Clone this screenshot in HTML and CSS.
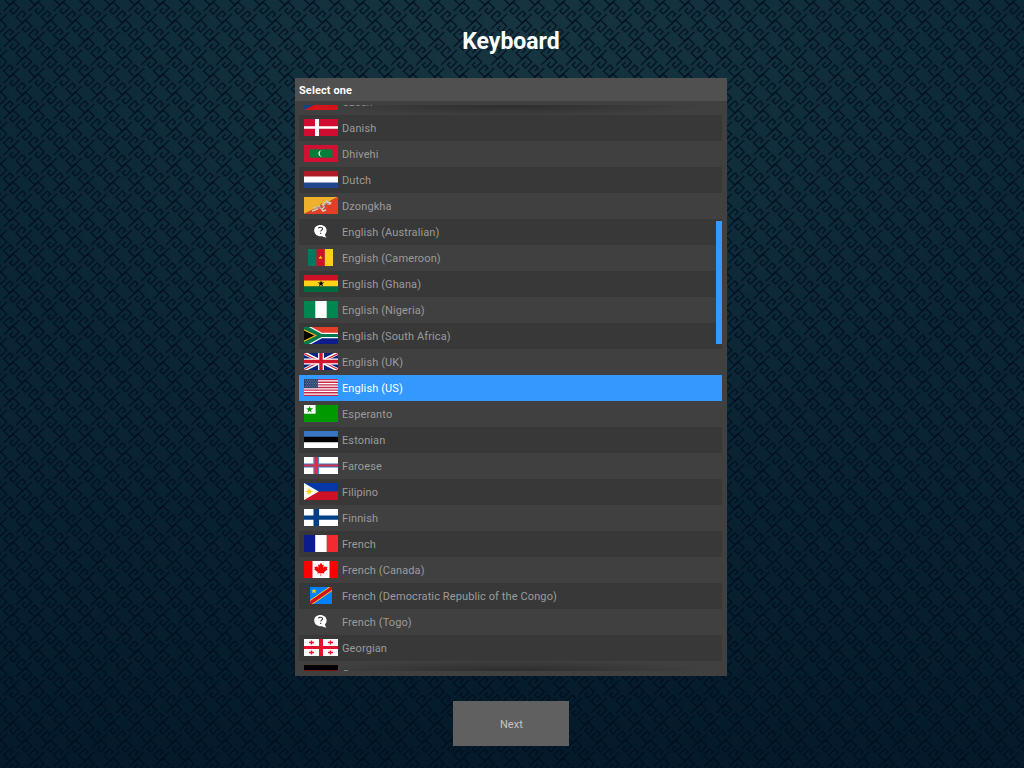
FILE: index.html
```
<!DOCTYPE html>
<html lang="en">
<head>
<meta charset="utf-8">
<title>Keyboard</title>
<link rel="stylesheet" href="styles.css">
</head>
<body>
<svg class="backdrop" width="1024" height="768" aria-hidden="true">
  <defs>
    <g id="key">
      <path d="M-9.4 3L0-6L6.2 0L0 6L-3.1 3L0 0"/>
      <path d="M18.8 6L9.4 15L3.1 9L9.4 3L12.5 6L9.4 9"/>
    </g>
    <pattern id="weave" width="25" height="36" patternUnits="userSpaceOnUse" patternTransform="translate(13 8)">
      <g fill="none" stroke="#000c1c" stroke-opacity=".75" stroke-width="1.5">
        <use href="#key"/><use href="#key" x="25"/>
        <use href="#key" x="-12.5" y="18"/><use href="#key" x="12.5" y="18"/>
        <use href="#key" x="-12.5" y="-18"/><use href="#key" x="12.5" y="-18"/>
        <use href="#key" y="36"/><use href="#key" x="25" y="36"/>
      </g>
    </pattern>
  </defs>
  <rect width="1024" height="768" fill="url(#weave)"/>
</svg>
<main class="screen">
  <h1 class="title">Keyboard</h1>
  <section class="panel">
    <h2 class="panel-head">Select one</h2>
    <div class="viewport">
      <ul class="list">
        <li class="row"><svg class="flag" viewBox="0 0 34 17"><path fill="#fff" d="M0 0h34v9H0z"/><path fill="#d7141a" d="M0 8.5h34V17H0z"/><path fill="#11457e" d="M0 0l17 8.5L0 17z"/></svg>Czech</li>
        <li class="row"><svg class="flag" viewBox="0 0 34 17"><path fill="#d00c33" d="M0 0h34v17H0z"/><path fill="#fff" d="M11 0h4v17h-4zM0 7.3h34v2.4H0z"/></svg>Danish</li>
        <li class="row"><svg class="flag" viewBox="0 0 34 17"><path fill="#d21034" d="M0 0h34v17H0z"/><path fill="#007e3a" d="M5.5 4.3h23v8.4h-23z"/><path fill="#fff" d="M18.6 5.6a3.1 3.1 0 1 0 0 5.8a2.9 2.9 0 0 1 0-5.8z"/></svg>Dhivehi</li>
        <li class="row"><svg class="flag" viewBox="0 0 34 17"><path fill="#fff" d="M0 0h34v17H0z"/><path fill="#ae1c28" d="M0 0h34v5.6H0z"/><path fill="#21468b" d="M0 11.4h34V17H0z"/></svg>Dutch</li>
        <li class="row"><svg class="flag" viewBox="0 0 34 17"><path fill="#efb12c" d="M0 0h34L0 17z"/><path fill="#e33f28" d="M34 0v17H0z"/><path fill="none" stroke="#d3cbbd" stroke-width="1.7" d="M8 14l3-1 2-1-2-1 4-1 3 2 2-2-1-2 3-2 3 1 2-2M15 9l1 1M17 11l2 3 3-1M20 6l4-1 2 2M22 4l2 1M25 5l2 2"/><path fill="none" stroke="#8d7360" stroke-width=".8" d="M11 12l3-2 4 1 3-3 1-2 3 1M18 6l-2 2M22 10l2 1"/></svg>Dzongkha</li>
        <li class="row"><svg class="flag" viewBox="0 0 34 17"><path fill="#fff" d="M16.3 2.1c3.7 0 6.3 2.3 6.3 5.5 0 1.8-.8 3-1.7 4 .1 1.2.7 2 1.8 2.7-2 .3-3.4-.2-4.5-1.1-4.4.8-8-1.7-8-5.6 0-3.2 2.5-5.5 6.1-5.5z"/><path fill="none" stroke="#303030" stroke-width="1.1" d="M14.4 5.4c.4-1.4 4.2-1.6 4.1.3 0 1.4-1.8 1.4-1.8 2.8M16.7 9.7v1.3"/></svg>English (Australian)</li>
        <li class="row"><svg class="flag" viewBox="0 0 34 17"><path fill="#007a5e" d="M4 0h9v17H4z"/><path fill="#ce1126" d="M12.4 0h8.4v17h-8.4z"/><path fill="#fcd116" d="M20.8 0H29v17h-8.2zM16.5 6.5l.6 1.5h1.6l-1.3 1 .5 1.6-1.4-1-1.4 1 .5-1.6-1.3-1h1.6z"/></svg>English (Cameroon)</li>
        <li class="row"><svg class="flag" viewBox="0 0 34 17"><path fill="#ce1126" d="M0 0h34v6H0z"/><path fill="#fcd116" d="M0 5.6h34v6H0z"/><path fill="#006b3f" d="M0 11.4h34V17H0z"/><path d="M17 5.6l.8 2h2.5l-2 1.4.8 2.4-2.1-1.5-2.1 1.5.8-2.4-2-1.4h2.5z"/></svg>English (Ghana)</li>
        <li class="row"><svg class="flag" viewBox="0 0 34 17"><path fill="#008751" d="M0 0h34v17H0z"/><path fill="#fff" d="M11.3 0h11.4v17H11.3z"/></svg>English (Nigeria)</li>
        <li class="row"><svg class="flag" viewBox="0 0 34 17"><path fill="#e23d28" d="M0 0h34v8.5H0z"/><path fill="#0c1c8c" d="M0 8.5h34V17H0z"/><path fill="none" stroke="#fff" stroke-width="5.6" d="M0-.8L17 8.5h17M0 17.8L17 8.5"/><path fill="#007a4d" d="M0 0v17L17 8.5z"/><path fill="none" stroke="#007a4d" stroke-width="3.2" d="M0-.8L17 8.5h17M0 17.8L17 8.5"/><path stroke="#ffb612" stroke-width="1.2" d="M-1 2.4L11.6 8.5L-1 14.6z"/></svg>English (South Africa)</li>
        <li class="row"><svg class="flag" viewBox="0 0 34 17"><path fill="#00247d" d="M0 0h34v17H0z"/><path stroke="#fff" stroke-width="3.4" d="M0 0l34 17M34 0L0 17"/><path stroke="#cf142b" stroke-width="1.1" d="M0 .6l17 8.5M17 8l17 8.5M34 .6L17 9M17 8L0 16.5"/><path stroke="#fff" stroke-width="5.8" d="M17 0v17M0 8.5h34"/><path stroke="#cf142b" stroke-width="3.4" d="M17 0v17M0 8.5h34"/></svg>English (UK)</li>
        <li class="row selected"><svg class="flag" viewBox="0 0 34 17"><path fill="#fff" d="M0 0h34v17H0z"/><path stroke="#c52a4b" stroke-width="1.31" d="M0 .65h34M0 3.27h34M0 5.88h34M0 8.5h34M0 11.12h34M0 13.73h34M0 16.35h34"/><path fill="#2f426f" d="M0 0h14v9.1H0z"/><path stroke="#7f9ab8" stroke-width=".8" stroke-dasharray=".9 1.3" d="M1 1.3h13M2 2.9h12M1 4.5h13M2 6.1h12M1 7.7h13"/></svg>English (US)</li>
        <li class="row"><svg class="flag" viewBox="0 0 34 17"><path fill="#090" d="M0 0h34v17H0z"/><path fill="#fff" d="M0 0h11.6v8.7H0z"/><path fill="#090" d="M5.6 1l.9 2.3h2.7L7 5l.8 2.4-2.2-1.5-2.2 1.5L4.2 5 2 3.3h2.7z"/></svg>Esperanto</li>
        <li class="row"><svg class="flag" viewBox="0 0 34 17"><path fill="#fff" d="M0 0h34v17H0z"/><path fill="#3a75c4" d="M0 0h34v6H0z"/><path d="M0 5.7h34v5.5H0z"/></svg>Estonian</li>
        <li class="row"><svg class="flag" viewBox="0 0 34 17"><path fill="#fff" d="M0 0h34v17H0z"/><path stroke="#3077bd" stroke-width="4.2" d="M0 8.5h34"/><path stroke="#3e8cc9" stroke-width="5.8" d="M12.2 0v17"/><path stroke="#d62f48" stroke-width="2" d="M0 8.5h34"/><path stroke="#ed2939" stroke-width="3.4" d="M12.2 0v17"/></svg>Faroese</li>
        <li class="row"><svg class="flag" viewBox="0 0 34 17"><path fill="#0038a8" d="M0 0h34v8.5H0z"/><path fill="#ce1126" d="M0 8.5h34V17H0z"/><path fill="#fff" d="M0 0l14.7 8.5L0 17z"/><circle cx="5.1" cy="8.5" r="1.9" fill="#fcd116"/><path stroke="#fcd116" stroke-width=".8" d="M5.1 5v7M1.6 8.5h7M2.7 6.1l4.8 4.8M7.5 6.1l-4.8 4.8M1 1.8v1.4M1 13.8v1.4M12 8v1.2"/></svg>Filipino</li>
        <li class="row"><svg class="flag" viewBox="0 0 34 17"><path fill="#fff" d="M0 0h34v17H0z"/><path fill="#003f87" d="M9.5 0h5.6v17H9.5zM0 6.4h34v4.4H0z"/></svg>Finnish</li>
        <li class="row"><svg class="flag" viewBox="0 0 34 17"><path fill="#0c1c8c" d="M0 0h11.2v17H0z"/><path fill="#fff" d="M11.2 0h11.6v17H11.2z"/><path fill="#f42a32" d="M22.8 0H34v17H22.8z"/></svg>French</li>
        <li class="row"><svg class="flag" viewBox="0 0 34 17"><path fill="#f00" d="M0 0h34v17H0z"/><path fill="#fff" d="M8.5 0h17v17h-17z"/><path fill="#f00" d="M17 1.8l1.4 2.3 1.3-.6-.5 3.3 1.9-1.8.4 1 2-.3-.7 2 .8.5-3.6 3 .4 1.3-3.2-.5v3.2h-.6V12l-3.3.5.5-1.3-3.7-3 .9-.5-.7-2 2 .3.4-1 1.8 1.8-.4-3.3 1.3.6z"/></svg>French (Canada)</li>
        <li class="row"><svg class="flag" viewBox="0 0 34 17"><svg x="6" width="22" height="17"><path fill="#007fff" d="M0 0h22v17H0z"/><path stroke="#f7d618" stroke-width="5" d="M-2 17.5L24-.5"/><path stroke="#ce1021" stroke-width="3.4" d="M-2 17.5L24-.5"/><path fill="#f7d618" d="M4 1.4l.8 1.8h2L5.3 4.5l.6 2L4 5.3 2.1 6.5l.6-2L1.2 3.2h2z"/></svg></svg>French (Democratic Republic of the Congo)</li>
        <li class="row"><svg class="flag" viewBox="0 0 34 17"><path fill="#fff" d="M16.3 2.1c3.7 0 6.3 2.3 6.3 5.5 0 1.8-.8 3-1.7 4 .1 1.2.7 2 1.8 2.7-2 .3-3.4-.2-4.5-1.1-4.4.8-8-1.7-8-5.6 0-3.2 2.5-5.5 6.1-5.5z"/><path fill="none" stroke="#303030" stroke-width="1.1" d="M14.4 5.4c.4-1.4 4.2-1.6 4.1.3 0 1.4-1.8 1.4-1.8 2.8M16.7 9.7v1.3"/></svg>French (Togo)</li>
        <li class="row"><svg class="flag" viewBox="0 0 34 17"><path fill="#fff" d="M0 0h34v17H0z"/><path fill="#e8112d" d="M15 0h4v17h-4zM0 7h34v3H0z"/><path stroke="#e8112d" stroke-width="1.4" d="M5 3.5h5M7.5 1.4v4.2M24 3.5h5M26.5 1.4v4.2M5 13.5h5M7.5 11.4v4.2M24 13.5h5M26.5 11.4v4.2"/></svg>Georgian</li>
        <li class="row"><svg class="flag" viewBox="0 0 34 17"><path d="M0 0h34v5.6H0z"/><path fill="#d00" d="M0 5.6h34v6H0z"/><path fill="#ffce00" d="M0 11.3h34V17H0z"/></svg>German</li>
      </ul>
      <div class="shade shade-top"></div>
      <div class="shade shade-bottom"></div>
      <div class="thumb"></div>
    </div>
  </section>
  <button class="next">Next</button>
</main>
</body>
</html>
```
FILE: styles.css
```
* { box-sizing: border-box; }
body {
  margin: 0;
  width: 1024px;
  height: 768px;
  overflow: hidden;
  font-family: Roboto, sans-serif;
  background: radial-gradient(ellipse 600px 420px at 50% 5%, rgba(26, 58, 68, 0.75), rgba(13, 40, 54, 0)), linear-gradient(#0b2737, #0a2434 55%, #041a2a);
}
.backdrop { position: absolute; inset: 0; }
.screen {
  position: relative;
  display: flex;
  flex-direction: column;
  align-items: center;
  width: 1022px;
  height: 768px;
  padding-top: 27px;
}
.title {
  margin: 0 0 21px;
  height: 30px;
  font-size: 23px;
  line-height: 30px;
  font-weight: 700;
  color: #fff;
}
.panel {
  width: 432px;
  height: 598px;
  padding: 0 5px 0 4px;
  background: #404040;
}
.panel-head {
  margin: 0 -5px 4px -4px;
  padding: 1px 4px 0;
  height: 23px;
  line-height: 23px;
  font-size: 11px;
  letter-spacing: 0.1px;
  font-weight: 700;
  color: #fff;
  background: #505050;
}
.viewport { position: relative; height: 566px; overflow: hidden; }
.list { margin: -16px 0 0; padding: 0; list-style: none; }
.row {
  display: flex;
  align-items: center;
  gap: 4px;
  height: 26px;
  padding-left: 5px;
  font-size: 11px;
  letter-spacing: 0.11px;
  white-space: nowrap;
  color: #9b9b9b;
}
.row:nth-child(even) { background: #383838; }
.row.selected { background: #3399ff; color: #fff; }
.flag { width: 34px; height: 17px; margin-bottom: 1px; flex: none; overflow: hidden; }
.shade { position: absolute; left: 0; right: 0; height: 20px; }
.shade-top { top: 0; background: radial-gradient(ellipse 47% 55% at 50% 0, rgba(0, 0, 0, 0.3), transparent); }
.shade-bottom { bottom: 0; background: radial-gradient(ellipse 47% 55% at 50% 100%, rgba(0, 0, 0, 0.3), transparent); }
.thumb {
  position: absolute;
  right: 0;
  top: 116px;
  width: 6px;
  height: 123px;
  background: #3399ff;
}
.next {
  margin-top: 25px;
  width: 116px;
  height: 45px;
  padding: 2px 0 0 1px;
  border: 0;
  font: 11px Roboto, sans-serif;
  letter-spacing: 0.1px;
  color: #c4c4c4;
  background: #606060;
}
```
